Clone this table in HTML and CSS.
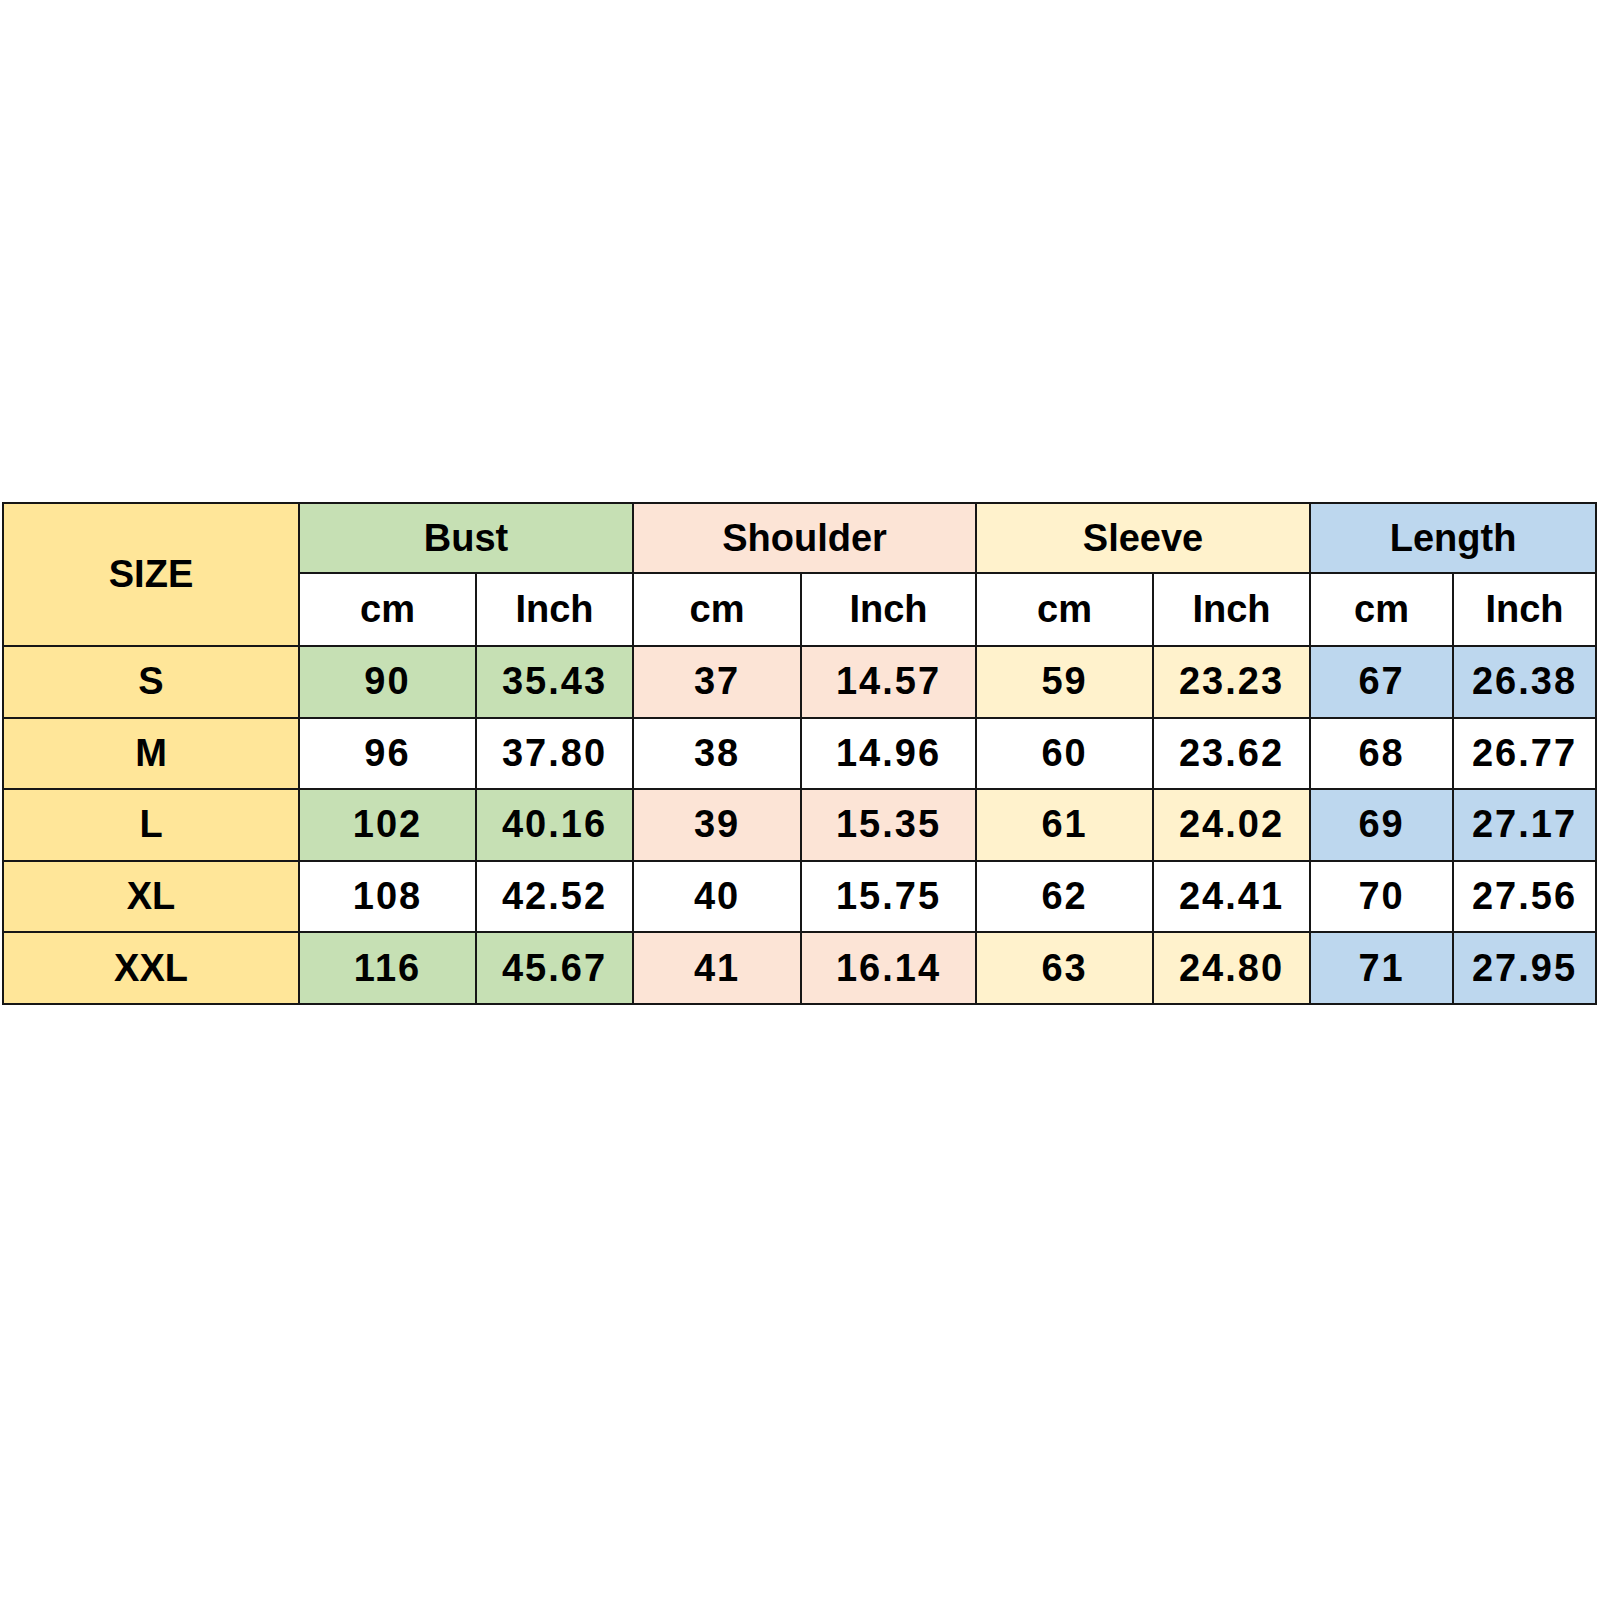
FILE: index.html
```html
<!DOCTYPE html>
<html>
<head>
<meta charset="utf-8">
<link rel="stylesheet" href="styles.css">
</head>
<body>
<div class="page">
<table class="chart">
  <colgroup>
    <col class="c-size"><col class="c-bust-cm"><col class="c-bust-in">
    <col class="c-sh-cm"><col class="c-sh-in">
    <col class="c-sl-cm"><col class="c-sl-in">
    <col class="c-len-cm"><col class="c-len-in">
  </colgroup>
  <tr class="r-head1">
    <th rowspan="2" class="size">SIZE</th>
    <th colspan="2" class="bust">Bust</th>
    <th colspan="2" class="shoulder">Shoulder</th>
    <th colspan="2" class="sleeve">Sleeve</th>
    <th colspan="2" class="length">Length</th>
  </tr>
  <tr class="r-head2">
    <th>cm</th><th>Inch</th><th>cm</th><th>Inch</th><th>cm</th><th>Inch</th><th>cm</th><th>Inch</th>
  </tr>
  <tr class="r-data tinted">
    <th class="size">S</th>
    <td class="bust">90</td><td class="bust">35.43</td>
    <td class="shoulder">37</td><td class="shoulder">14.57</td>
    <td class="sleeve">59</td><td class="sleeve">23.23</td>
    <td class="length">67</td><td class="length">26.38</td>
  </tr>
  <tr class="r-data">
    <th class="size">M</th>
    <td>96</td><td>37.80</td><td>38</td><td>14.96</td><td>60</td><td>23.62</td><td>68</td><td>26.77</td>
  </tr>
  <tr class="r-data tinted">
    <th class="size">L</th>
    <td class="bust">102</td><td class="bust">40.16</td>
    <td class="shoulder">39</td><td class="shoulder">15.35</td>
    <td class="sleeve">61</td><td class="sleeve">24.02</td>
    <td class="length">69</td><td class="length">27.17</td>
  </tr>
  <tr class="r-data">
    <th class="size">XL</th>
    <td>108</td><td>42.52</td><td>40</td><td>15.75</td><td>62</td><td>24.41</td><td>70</td><td>27.56</td>
  </tr>
  <tr class="r-data tinted">
    <th class="size">XXL</th>
    <td class="bust">116</td><td class="bust">45.67</td>
    <td class="shoulder">41</td><td class="shoulder">16.14</td>
    <td class="sleeve">63</td><td class="sleeve">24.80</td>
    <td class="length">71</td><td class="length">27.95</td>
  </tr>
</table>
</div>
</body>
</html>
```
FILE: styles.css
```css
html, body {
  margin: 0;
  padding: 0;
  background: #ffffff;
}
.page {
  width: 1600px;
  height: 1600px;
  padding-top: 502px;
  padding-left: 2px;
  box-sizing: border-box;
}
.chart {
  border-collapse: collapse;
  table-layout: fixed;
  width: 1595px;
  font-family: "Liberation Sans", Arial, sans-serif;
  font-weight: 700;
  font-size: 38px;
  color: #000;
}
.c-size { width: 296px; }
.c-bust-cm { width: 177px; }
.c-bust-in { width: 157px; }
.c-sh-cm { width: 168px; }
.c-sh-in { width: 175px; }
.c-sl-cm { width: 177px; }
.c-sl-in { width: 157px; }
.c-len-cm { width: 143px; }
.c-len-in { width: 143px; }
.chart th, .chart td {
  border: 2px solid #161616;
  padding: 0;
  text-align: center;
  vertical-align: middle;
  font-weight: 700;
  background: #ffffff;
}
.chart td { letter-spacing: 2px; }
.r-head1 { height: 70px; }
.r-head2 { height: 73px; }
.r-data { height: 71.6px; }
.chart .size { background: #ffe699; }
.chart .bust { background: #c6e0b4; }
.chart .shoulder { background: #fce4d6; }
.chart .sleeve { background: #fff2cc; }
.chart .length { background: #bdd7ee; }
```
